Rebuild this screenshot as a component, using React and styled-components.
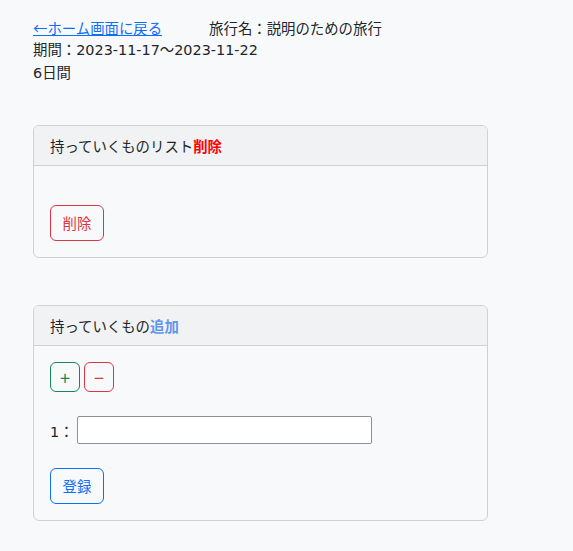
import React from "react";
import styled, { createGlobalStyle } from "styled-components";

const GlobalStyle = createGlobalStyle`
  html, body {
    margin: 0;
    padding: 0;
    background: #f8f9fa;
  }
  body {
    font-family: "DejaVu Sans", "Noto Sans CJK JP", sans-serif;
    font-size: 14.4px;
    color: #212529;
  }
`;

const Page = styled.div`
  padding: 16px 0 30px 33px;
`;

const InfoLine = styled.div`
  height: 23px;
  line-height: 23px;
  display: flex;
  align-items: baseline;
`;

const BackLink = styled.a`
  font-family: "Noto Sans CJK JP", sans-serif;
  color: #0d6efd;
  text-decoration: underline;
  margin-right: 47px;
  cursor: pointer;
`;

const Card = styled.section`
  width: 455px;
  box-sizing: border-box;
  border: 1px solid #cfd1d3;
  border-radius: 6px;
  margin-top: ${(p) => p.$top}px;
  overflow: hidden;
`;

const CardHeader = styled.div`
  height: 40px;
  box-sizing: border-box;
  padding: 0 16px;
  display: flex;
  align-items: center;
  background: #f1f2f4;
  border-bottom: 1px solid #cfd1d3;
`;

const Accent = styled.span`
  color: ${(p) => p.$color};
  font-weight: bold;
`;

const CardBody = styled.div`
  padding: 16px;
  display: flex;
  flex-direction: column;
  align-items: flex-start;
  gap: ${(p) => p.$gap || 0}px;
`;

const EmptyList = styled.div`
  height: 23px;
`;

const OutlineButton = styled.button`
  box-sizing: border-box;
  height: ${(p) => p.$h || 36}px;
  width: ${(p) => p.$w || 54}px;
  padding: 0;
  background: transparent;
  border: 1px solid ${(p) => p.$color};
  color: ${(p) => p.$color};
  border-radius: 6px;
  font-family: "Noto Sans CJK JP", sans-serif;
  font-size: ${(p) => (p.$w ? 18 : 14.4)}px;
  line-height: 22px;
  cursor: pointer;
  display: inline-flex;
  align-items: center;
  justify-content: center;
`;

const ButtonRow = styled.div`
  display: flex;
  gap: 4px;
`;

const FieldRow = styled.div`
  display: flex;
  align-items: center;
  gap: 3px;
`;

const Label = styled.span`
  white-space: pre;
`;

const TextInput = styled.input`
  width: 295px;
  height: 28px;
  box-sizing: border-box;
  border: 1px solid #8f8f9d;
  border-radius: 2px;
  background: #fff;
  padding: 2px 4px;
  font-family: inherit;
  font-size: 14px;
`;

export default function App() {
  return (
    <>
      <GlobalStyle />
      <Page>
        <InfoLine>
          <BackLink href="#">←ホーム画面に戻る</BackLink>
          <span>旅行名：説明のための旅行</span>
        </InfoLine>
        <InfoLine>期間：2023-11-17～2023-11-22</InfoLine>
        <InfoLine>6日間</InfoLine>

        <Card $top={40}>
          <CardHeader>
            持っていくものリスト<Accent $color="#ff0000">削除</Accent>
          </CardHeader>
          <CardBody>
            <EmptyList />
            <OutlineButton $color="#dc3545">削除</OutlineButton>
          </CardBody>
        </Card>

        <Card $top={47}>
          <CardHeader>
            持っていくもの<Accent $color="#6495ed">追加</Accent>
          </CardHeader>
          <CardBody $gap={24}>
            <ButtonRow>
              <OutlineButton $color="#198754" $w={30} $h={30}>+</OutlineButton>
              <OutlineButton $color="#dc3545" $w={30} $h={30}>−</OutlineButton>
            </ButtonRow>
            <FieldRow>
              <Label>1：</Label>
              <TextInput type="text" />
            </FieldRow>
            <OutlineButton $color="#0d6efd">登録</OutlineButton>
          </CardBody>
        </Card>
      </Page>
    </>
  );
}
